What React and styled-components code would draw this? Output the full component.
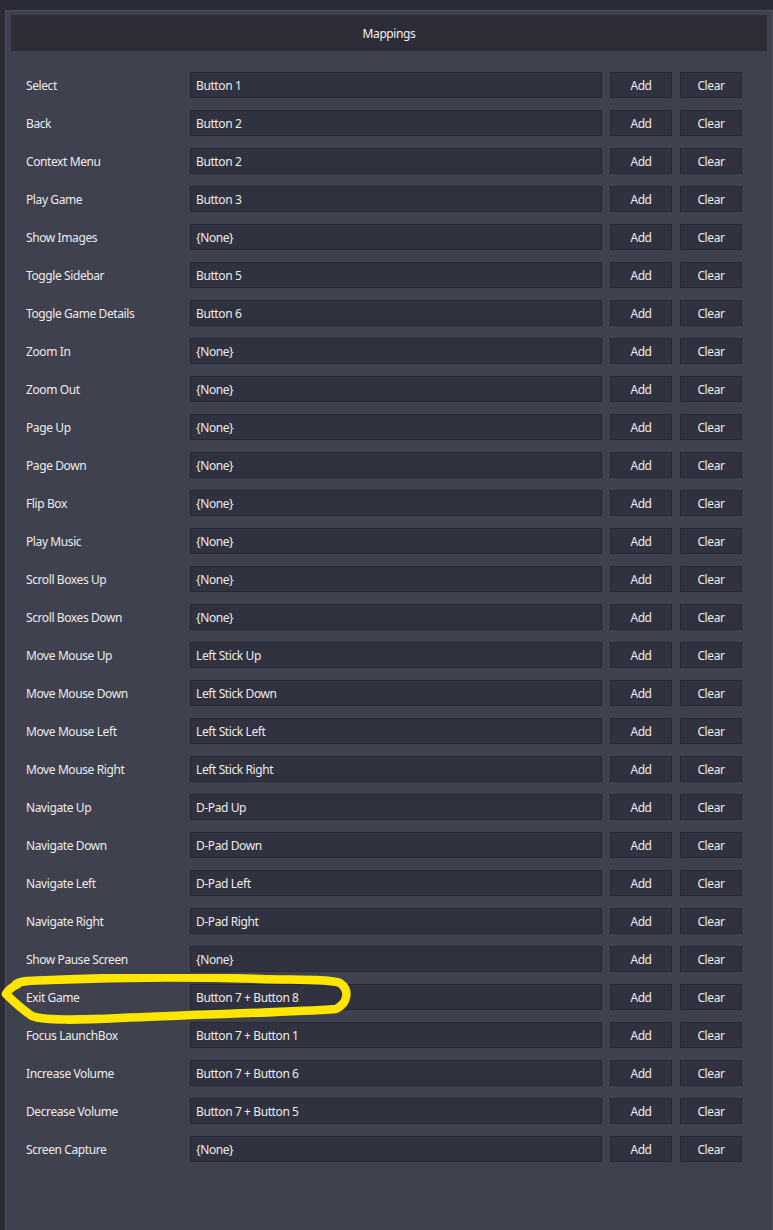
import React from "react";
import styled, { createGlobalStyle } from "styled-components";

const mappings = [
  ["Select", "Button 1"],
  ["Back", "Button 2"],
  ["Context Menu", "Button 2"],
  ["Play Game", "Button 3"],
  ["Show Images", "{None}"],
  ["Toggle Sidebar", "Button 5"],
  ["Toggle Game Details", "Button 6"],
  ["Zoom In", "{None}"],
  ["Zoom Out", "{None}"],
  ["Page Up", "{None}"],
  ["Page Down", "{None}"],
  ["Flip Box", "{None}"],
  ["Play Music", "{None}"],
  ["Scroll Boxes Up", "{None}"],
  ["Scroll Boxes Down", "{None}"],
  ["Move Mouse Up", "Left Stick Up"],
  ["Move Mouse Down", "Left Stick Down"],
  ["Move Mouse Left", "Left Stick Left"],
  ["Move Mouse Right", "Left Stick Right"],
  ["Navigate Up", "D-Pad Up"],
  ["Navigate Down", "D-Pad Down"],
  ["Navigate Left", "D-Pad Left"],
  ["Navigate Right", "D-Pad Right"],
  ["Show Pause Screen", "{None}"],
  ["Exit Game", "Button 7 + Button 8"],
  ["Focus LaunchBox", "Button 7 + Button 1"],
  ["Increase Volume", "Button 7 + Button 6"],
  ["Decrease Volume", "Button 7 + Button 5"],
  ["Screen Capture", "{None}"],
];

const GlobalStyle = createGlobalStyle`
  html, body {
    margin: 0;
    padding: 0;
    background-color: #2b2b36;
    overflow: hidden;
  }
  body {
    font-family: "Noto Sans", "Open Sans", sans-serif;
    font-size: 12px;
    letter-spacing: -0.4px;
    color: #ececec;
  }
`;

const Page = styled.div`
  min-height: 1230px;
  padding-top: 10px;
  padding-left: 5px;
  box-sizing: border-box;
`;

const Panel = styled.div`
  width: 768px;
  min-height: 1220px;
  box-sizing: border-box;
  background-color: #40414e;
  border: 1px solid #4d4f5d;
  border-bottom: none;
  padding: 4px 5px 0 5px;
`;

const Header = styled.div`
  height: 36px;
  display: flex;
  align-items: center;
  justify-content: center;
  background-color: #2d2d38;
  color: #f2f2f2;
`;

const List = styled.div`
  display: flex;
  flex-direction: column;
  gap: 12px;
  padding-top: 21px;
`;

const Row = styled.div`
  position: relative;
  display: flex;
  align-items: center;
  height: 26px;
`;

const Label = styled.div`
  width: 179px;
  padding-left: 15px;
  box-sizing: border-box;
  color: #ececec;
`;

const Field = styled.div`
  width: 412px;
  height: 26px;
  box-sizing: border-box;
  display: flex;
  align-items: center;
  padding-left: 5px;
  background-color: #31323f;
  border: 1px solid #272831;
  color: #ececec;
`;

const Button = styled.div`
  width: 62px;
  height: 26px;
  box-sizing: border-box;
  margin-left: 8px;
  display: flex;
  align-items: center;
  justify-content: center;
  background-color: #31323f;
  border: 1px solid #272831;
  color: #ececec;
`;

const Scribble = styled.svg`
  position: absolute;
  left: -11px;
  top: -10px;
  width: 360px;
  height: 56px;
  pointer-events: none;
`;

function Highlight() {
  return (
    <Scribble viewBox="0 974 360 56">
      <path
        d="M 16 984 C 22 980, 32 981, 50 980 C 120 977, 200 977, 260 979 C 300 980, 330 979, 340 983 C 350 990, 348 1003, 336 1009 C 280 1013, 200 1014, 120 1018 C 80 1020, 45 1021, 32 1016 C 20 1008, 10 998, 6 994 C 8 990, 12 987, 18 984"
        fill="none"
        stroke="#ffe600"
        strokeWidth="8.5"
        strokeLinecap="round"
        strokeLinejoin="round"
      />
    </Scribble>
  );
}

function MappingRow({ name, value }) {
  return (
    <Row>
      <Label>{name}</Label>
      <Field>{value}</Field>
      <Button>Add</Button>
      <Button>Clear</Button>
      {name === "Exit Game" ? <Highlight /> : null}
    </Row>
  );
}

export default function App() {
  return (
    <>
      <GlobalStyle />
      <Page>
        <Panel>
          <Header>Mappings</Header>
          <List>
            {mappings.map(([name, value]) => (
              <MappingRow key={name} name={name} value={value} />
            ))}
          </List>
        </Panel>
      </Page>
    </>
  );
}
